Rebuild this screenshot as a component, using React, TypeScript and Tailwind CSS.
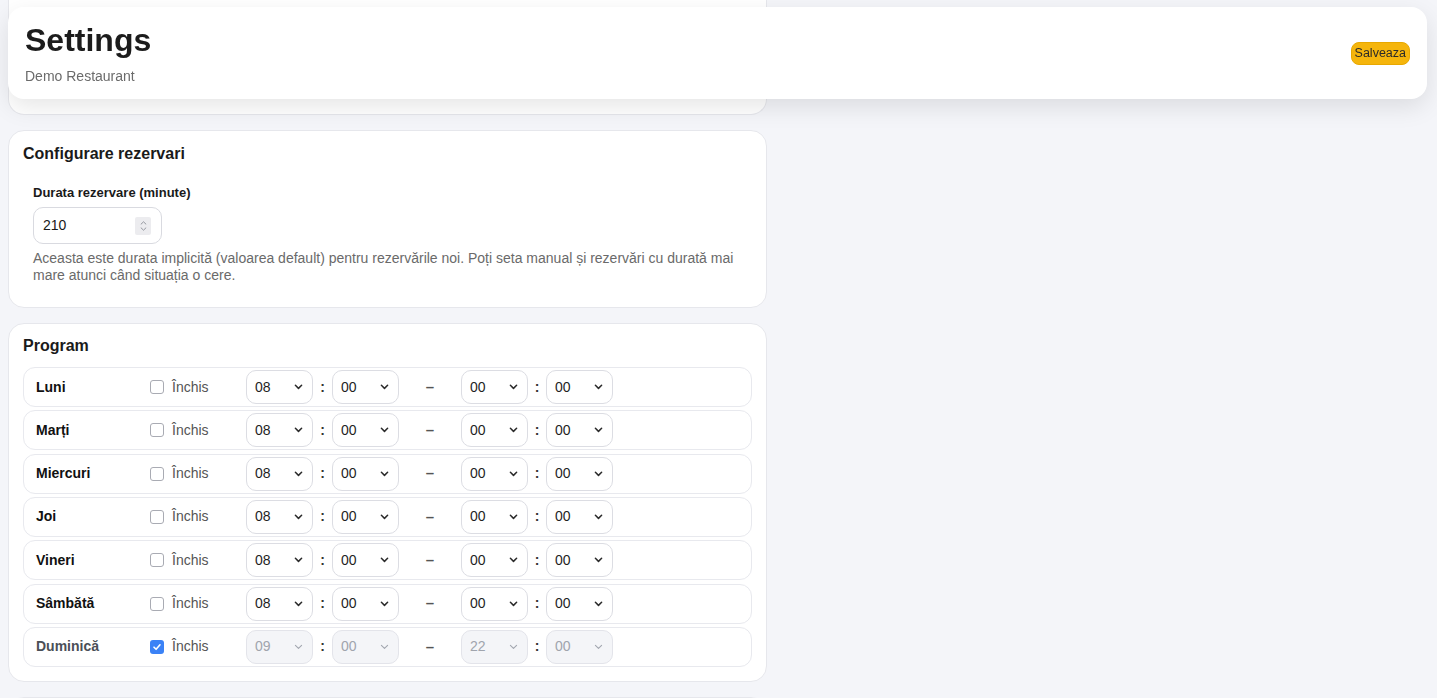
import React from "react";

const days = [
  { name: "Luni", closed: false, from: ["08", "00"], to: ["00", "00"] },
  { name: "Marți", closed: false, from: ["08", "00"], to: ["00", "00"] },
  { name: "Miercuri", closed: false, from: ["08", "00"], to: ["00", "00"] },
  { name: "Joi", closed: false, from: ["08", "00"], to: ["00", "00"] },
  { name: "Vineri", closed: false, from: ["08", "00"], to: ["00", "00"] },
  { name: "Sâmbătă", closed: false, from: ["08", "00"], to: ["00", "00"] },
  { name: "Duminică", closed: true, from: ["09", "00"], to: ["22", "00"] },
];

function Chevron({ disabled }: { disabled: boolean }) {
  return (
    <svg width="9" height="6" viewBox="0 0 9 6" className="shrink-0">
      <path
        d="M1.4 1.3 L4.5 4.4 L7.6 1.3"
        fill="none"
        stroke={disabled ? "#a3a7b0" : "#2a2a2a"}
        strokeWidth={disabled ? 1.1 : 1.5}
        strokeLinecap="round"
        strokeLinejoin="round"
      />
    </svg>
  );
}

function Select({ value, disabled }: { value: string; disabled: boolean }) {
  return (
    <div
      className={
        disabled
          ? "flex h-[34px] w-[67px] items-center justify-between rounded-[10px] border border-[#e3e4ea] bg-[#f4f5f8] pl-[8px] pr-[9px] text-[14px] text-[#a0a4ad]"
          : "flex h-[34px] w-[67px] items-center justify-between rounded-[10px] border border-[#dcdde3] bg-white pl-[8px] pr-[9px] text-[14px] text-[#1f1f1f]"
      }
    >
      <span>{value}</span>
      <Chevron disabled={disabled} />
    </div>
  );
}

function Checkbox({ checked }: { checked: boolean }) {
  return checked ? (
    <span className="flex h-[14px] w-[14px] items-center justify-center rounded-[3px] bg-[#3b82f6]">
      <svg width="10" height="10" viewBox="0 0 10 10">
        <path d="M2 5.2 L4.1 7.3 L8 2.8" fill="none" stroke="white" strokeWidth="1.6" strokeLinecap="round" strokeLinejoin="round" />
      </svg>
    </span>
  ) : (
    <span className="h-[14px] w-[14px] rounded-[3px] border border-[#a9abb3] bg-white" />
  );
}

export default function App() {
  return (
    <div className="min-h-[698px] bg-[#f4f5f9] font-['Liberation_Sans',Arial,sans-serif] text-[#1a1a1a]">
      <div className="flex w-[775px] flex-col gap-[15px] px-2 pb-10">
        {/* Card scrolled under header */}
        <div className="h-[115px] rounded-b-2xl border-x border-b border-[#e6e7ec] bg-white" />

        {/* Configurare rezervari */}
        <div className="rounded-2xl border border-[#e6e7ec] bg-white px-[14px] pb-[23px] pt-[11px]">
          <h2 className="text-[16px] font-bold leading-[24px] text-[#1a1a1a]">Configurare rezervari</h2>
          <div className="px-[10px]">
            <div className="mt-[18px] text-[13px] font-bold leading-[18px] text-[#1a1a1a]">Durata rezervare (minute)</div>
            <div className="mt-[5px] flex h-[37px] w-[129px] items-center justify-between rounded-[10px] border border-[#d9dae0] bg-white pl-[9px] pr-[10px]">
              <span className="text-[14px] text-[#1a1a1a]">210</span>
              <span className="flex h-[18px] w-[16px] flex-col items-center justify-center gap-[2px] rounded-[2px] bg-[#ececef]">
                <svg width="7" height="4" viewBox="0 0 7 4">
                  <path d="M0.8 3.4 L3.5 0.8 L6.2 3.4" fill="none" stroke="#8a8d96" strokeWidth="0.9" />
                </svg>
                <svg width="7" height="4" viewBox="0 0 7 4">
                  <path d="M0.8 0.6 L3.5 3.2 L6.2 0.6" fill="none" stroke="#8a8d96" strokeWidth="0.9" />
                </svg>
              </span>
            </div>
            <p className="mt-[6px] text-[14px] leading-[17px] text-[#6a6a6a]">
              Aceasta este durata implicită (valoarea default) pentru rezervările noi. Poți seta manual și rezervări cu durată mai mare atunci când situația o cere.
            </p>
          </div>
        </div>

        {/* Program */}
        <div className="rounded-2xl border border-[#e6e7ec] bg-white px-[14px] pb-[14px] pt-[10px]">
          <h2 className="text-[16px] font-bold leading-[24px] text-[#1a1a1a]">Program</h2>
          <div className="mt-[9px] flex flex-col gap-[3.33px]">
            {days.map((d) => (
              <div
                key={d.name}
                className="flex h-[40px] items-center rounded-xl border border-[#e8e9ee] bg-white pl-[12px]"
              >
                <span className={d.closed ? "w-[114px] text-[14px] font-bold text-[#4b4f57]" : "w-[114px] text-[14px] font-bold text-[#111]"}>
                  {d.name}
                </span>
                <div className="flex w-[96px] items-center gap-[8px]">
                  <Checkbox checked={d.closed} />
                  <span className="text-[14px] text-[#555]">Închis</span>
                </div>
                <Select value={d.from[0]} disabled={d.closed} />
                <span className="w-[19px] text-center text-[14px] font-bold text-[#333]">:</span>
                <Select value={d.from[1]} disabled={d.closed} />
                <span className="w-[62px] text-center text-[15px] font-bold text-[#555]">–</span>
                <Select value={d.to[0]} disabled={d.closed} />
                <span className="w-[18px] text-center text-[14px] font-bold text-[#333]">:</span>
                <Select value={d.to[1]} disabled={d.closed} />
              </div>
            ))}
          </div>
        </div>

        <div className="h-[80px] rounded-2xl border border-[#e6e7ec] bg-white" />
      </div>

      {/* Sticky header */}
      <header className="fixed left-2 right-[10px] top-[7px] flex h-[92px] items-center justify-between rounded-2xl bg-white pl-[17px] pr-[17px] shadow-[0_8px_24px_rgba(0,0,0,0.10)]">
        <div>
          <h1 className="text-[32px] font-bold leading-[40px] text-[#1c1c1c]">Settings</h1>
          <div className="mt-[6px] text-[14px] leading-[20px] text-[#6b6b6b]">Demo Restaurant</div>
        </div>
        <button className="h-[23px] rounded-lg border border-[#e8a800] bg-[#f5b50c] px-[3px] text-[12.5px] leading-none text-[#2a2a2a]">
          Salveaza
        </button>
      </header>
    </div>
  );
}
